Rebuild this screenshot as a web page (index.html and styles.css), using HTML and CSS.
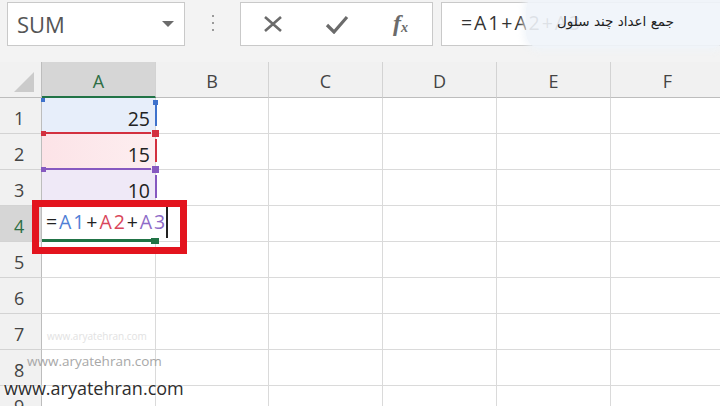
FILE: index.html
```html
<!DOCTYPE html>
<html>
<head>
<meta charset="utf-8">
<link rel="stylesheet" href="styles.css">
</head>
<body>
<div class="app">
  <div class="toolbar">
    <div class="namebox"><span class="name">SUM</span><span class="caret"></span></div>
    <div class="grip"><i></i><i></i><i></i></div>
    <div class="buttons">
      <span class="btn"><svg width="20" height="16" viewBox="0 0 20 16"><path d="M2 1 L18 15 M18 1 L2 15" stroke="#6b6b6b" stroke-width="2.6" fill="none"/></svg></span>
      <span class="btn"><svg width="24" height="19" viewBox="0 0 24 19"><path d="M2 10 L9 17 L22 2" stroke="#6b6b6b" stroke-width="3.2" fill="none" stroke-linejoin="miter"/></svg></span>
      <span class="btn fx"><i>f</i><span class="sx">x</span></span>
    </div>
    <div class="formula">=A1+A2+A3</div>
  </div>

  <div class="sheet">
    <div class="h corner"><span class="tri"></span></div>
    <div class="h sel">A</div><div class="h">B</div><div class="h">C</div><div class="h">D</div><div class="h">E</div><div class="h">F</div>

    <div class="rh">1</div>
    <div class="c num r-blue">25<span class="rng-right"></span><span class="sq tl"></span><span class="sq tr"></span></div>
    <div class="c"></div><div class="c"></div><div class="c"></div><div class="c"></div><div class="c"></div>

    <div class="rh">2</div>
    <div class="c num r-red">15<span class="rng-top"></span><span class="rng-right"></span><span class="sq tl"></span><span class="sq tr"></span></div>
    <div class="c"></div><div class="c"></div><div class="c"></div><div class="c"></div><div class="c"></div>

    <div class="rh">3</div>
    <div class="c num r-purple">10<span class="rng-top"></span><span class="rng-right"></span><span class="sq tl"></span><span class="sq tr"></span></div>
    <div class="c"></div><div class="c"></div><div class="c"></div><div class="c"></div><div class="c"></div>

    <div class="rh sel">4</div>
    <div class="c active">
      <div class="editor"><span class="k">=</span><span class="b">A1</span><span class="k">+</span><span class="r">A2</span><span class="k">+</span><span class="p">A3</span><span class="cursor"></span></div>
      <span class="handle"></span>
      <div class="mark"></div>
    </div>
    <div class="c"></div><div class="c"></div><div class="c"></div><div class="c"></div><div class="c"></div>

    <div class="rh">5</div>
    <div class="c"></div><div class="c"></div><div class="c"></div><div class="c"></div><div class="c"></div><div class="c"></div>
    <div class="rh">6</div>
    <div class="c"></div><div class="c"></div><div class="c"></div><div class="c"></div><div class="c"></div><div class="c"></div>
    <div class="rh">7</div>
    <div class="c"></div><div class="c"></div><div class="c"></div><div class="c"></div><div class="c"></div><div class="c"></div>
    <div class="rh">8</div>
    <div class="c"></div><div class="c"></div><div class="c"></div><div class="c"></div><div class="c"></div><div class="c"></div>
    <div class="rh">9</div>
    <div class="c"></div><div class="c"></div><div class="c"></div><div class="c"></div><div class="c"></div><div class="c"></div>
  </div>

  <div class="tip"><span class="tip-text">جمع اعداد چند سلول</span></div>
  <div class="wm wm1">www.aryatehran.com</div>
  <div class="wm wm2">www.aryatehran.com</div>
  <div class="wm wm3">www.aryatehran.com</div>
</div>
</body>
</html>
```
FILE: styles.css
```css
html, body {
  margin: 0;
  padding: 0;
}
body {
  width: 720px;
  height: 406px;
  overflow: hidden;
  background: #f3f3f3;
  font-family: "Open Sans", "Liberation Sans", sans-serif;
}
.app {
  position: relative;
  width: 720px;
  height: 406px;
  overflow: hidden;
}

/* toolbar */
.toolbar {
  height: 62px;
  box-sizing: border-box;
  padding-top: 2px;
  display: flex;
  align-items: flex-start;
  overflow: hidden;
}
.namebox {
  margin-left: 7px;
  width: 178px;
  height: 44px;
  box-sizing: border-box;
  border: 1px solid #c9c9c9;
  background: #fff;
  display: flex;
  align-items: center;
  justify-content: space-between;
  padding: 0 10px 0 9px;
  flex-shrink: 0;
}
.name {
  font-size: 22px;
  color: #555;
  line-height: 1;
}
.caret {
  width: 0;
  height: 0;
  border-left: 6px solid transparent;
  border-right: 6px solid transparent;
  border-top: 6px solid #6b6b6b;
}
.grip {
  margin-left: 27px;
  padding-top: 13px;
  display: flex;
  flex-direction: column;
  gap: 5px;
  flex-shrink: 0;
}
.grip i {
  display: block;
  width: 2px;
  height: 2px;
  background: #9a9a9a;
}
.buttons {
  margin-left: 26px;
  width: 193px;
  height: 44px;
  box-sizing: border-box;
  border: 1px solid #c9c9c9;
  background: #fff;
  display: grid;
  grid-template-columns: 64px 64px 63px;
  align-items: center;
  justify-items: center;
  flex-shrink: 0;
}
.btn {
  display: flex;
  align-items: center;
  justify-content: center;
}
.fx {
  font-family: "Liberation Serif", serif;
  color: #6b6b6b;
  font-size: 24px;
  line-height: 1;
  font-weight: bold;
  align-items: baseline;
  margin-top: -2px;
}
.fx i {
  font-style: italic;
}
.fx .sx {
  font-size: 14px;
  font-style: italic;
  margin-left: 0;
  position: relative;
  top: 1px;
}
.formula {
  margin-left: 8px;
  width: 300px;
  height: 44px;
  box-sizing: border-box;
  border: 1px solid #c9c9c9;
  background: #fff;
  flex-shrink: 0;
  padding-left: 19px;
  font-size: 19.5px;
  letter-spacing: 1.9px;
  color: #333;
  line-height: 40px;
}

/* sheet */
.sheet {
  display: grid;
  grid-template-columns: 42px 114px 113px 114px 114px 114px 114px;
  grid-auto-rows: 36px;
  background: #fff;
}
.h {
  background: #f1f1f1;
  border-right: 1px solid #d3d3d3;
  border-bottom: 1px solid #bdbdbd;
  box-sizing: border-box;
  display: flex;
  align-items: center;
  justify-content: center;
  font-size: 18px;
  color: #444;
  padding-top: 3px;
}
.h.sel {
  background: #d6d6d6;
  color: #2e6e45;
  border-bottom: 2px solid #217346;
}
.corner {
  justify-content: flex-end;
  align-items: flex-end;
  padding: 0 7px 5px 0;
  border-right-color: #bdbdbd;
}
.tri {
  width: 0;
  height: 0;
  border-left: 20px solid transparent;
  border-bottom: 20px solid #cbcbcb;
}
.rh {
  background: #f1f1f1;
  border-right: 1px solid #bdbdbd;
  border-bottom: 1px solid #d3d3d3;
  box-sizing: border-box;
  display: flex;
  align-items: flex-end;
  padding: 0 0 3px 14px;
  font-size: 18px;
  line-height: 24px;
  color: #444;
}
.rh.sel {
  background: #d6d6d6;
  color: #2e6e45;
}
.c {
  border-right: 1px solid #dadada;
  border-bottom: 1px solid #dadada;
  box-sizing: border-box;
  position: relative;
}
.num {
  display: flex;
  justify-content: flex-end;
  align-items: flex-end;
  font-size: 19.5px;
  line-height: 24px;
  color: #222;
  padding: 0 5px 2px 0;
}
.r-blue { background: #e7eefa; --rc: #3f72cc; }
.r-red { background: linear-gradient(to right, #fce3e7, #fdeef0); --rc: #d3303f; }
.r-purple { background: #efe9f7; --rc: #8659c0; }

.rng-top {
  position: absolute;
  top: -2px;
  left: 2px;
  right: 4px;
  height: 2px;
  background: var(--rc);
}
.rng-right {
  position: absolute;
  right: -2px;
  top: 5px;
  bottom: 7px;
  width: 2px;
  background: var(--rc);
}
.sq {
  position: absolute;
  background: var(--rc);
}
.sq.tl {
  left: -1px;
  top: -3px;
  width: 5px;
  height: 5px;
}
.sq.tr {
  right: -4px;
  top: -4px;
  width: 7px;
  height: 7px;
}
.r-blue .sq.tl { top: 0; width: 4px; height: 4px; }
.r-blue .sq.tr { top: 2px; width: 5px; height: 5px; right: -3px; }

/* active cell editor */
.active {
  border-bottom: 3px solid #217346;
}
.editor {
  position: absolute;
  left: 0;
  top: 0;
  bottom: 0;
  width: 138px;
  background: #fff;
  z-index: 2;
  display: flex;
  align-items: flex-end;
  padding: 0 0 5px 4px;
  box-sizing: border-box;
  font-size: 19.5px;
  letter-spacing: 1.9px;
  line-height: 24px;
}
.editor .k { color: #222; }
.editor .b { color: #4f7fd6; }
.editor .r { color: #d9465a; }
.editor .p { color: #8e6bc8; }
.cursor {
  display: block;
  width: 1.5px;
  height: 34px;
  background: #222;
  margin-left: -1px;
  margin-bottom: -4px;
}
.handle {
  position: absolute;
  right: -4px;
  bottom: -5px;
  width: 8px;
  height: 6px;
  background: #217346;
  z-index: 3;
}
.mark {
  position: absolute;
  left: -10px;
  top: -6px;
  width: 155px;
  height: 54px;
  box-sizing: border-box;
  border: 7px solid #e3141e;
  z-index: 4;
}

/* tooltip overlay */
.tip {
  position: absolute;
  left: 526px;
  top: -6px;
  width: 200px;
  height: 54px;
  background: rgba(239, 244, 249, 0.9);
  border-radius: 14px;
  box-shadow: 0 0 6px 3px rgba(239, 244, 249, 0.8);
  display: flex;
  align-items: center;
  justify-content: flex-end;
  padding-right: 52px;
  box-sizing: border-box;
}
.tip-text {
  direction: rtl;
  font-family: "DejaVu Sans", sans-serif;
  font-size: 13.5px;
  color: #1e1e1e;
  white-space: nowrap;
}

/* watermarks */
.wm {
  position: absolute;
  font-family: "Open Sans", sans-serif;
  white-space: nowrap;
  line-height: 1;
}
.wm1 {
  left: 47px;
  top: 331px;
  font-size: 10px;
  color: #e2e2e2;
}
.wm2 {
  left: 27px;
  top: 355px;
  font-size: 13.5px;
  color: #a8a8a8;
}
.wm3 {
  left: 4px;
  top: 379px;
  font-size: 18px;
  color: #2e2e2e;
  text-shadow: 0 0 3px #fff, 0 0 2px #fff;
}
```
